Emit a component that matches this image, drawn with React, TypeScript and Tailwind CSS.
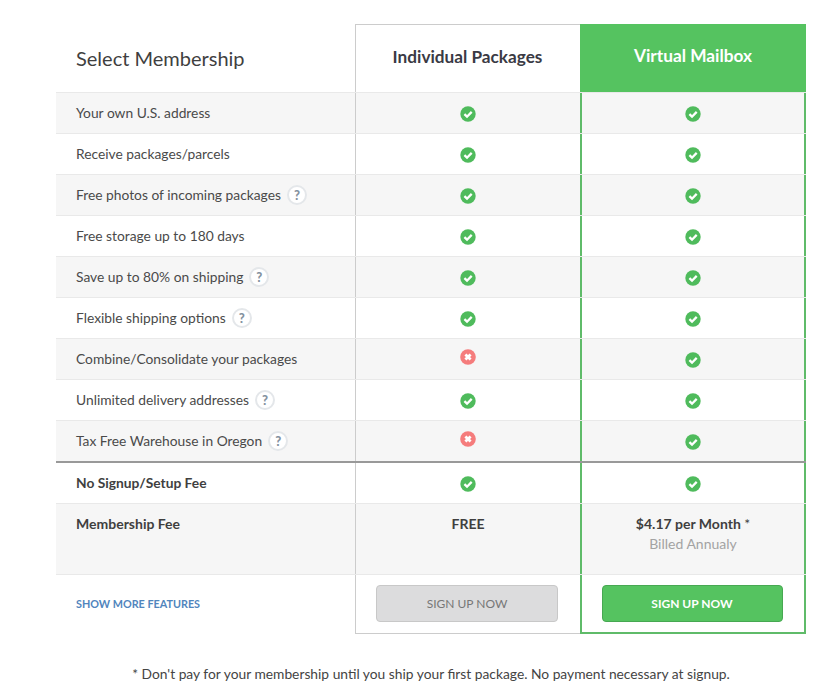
const features = [
  { label: 'Your own U.S. address', basic: true },
  { label: 'Receive packages/parcels', basic: true },
  { label: 'Free photos of incoming packages', basic: true, help: true },
  { label: 'Free storage up to 180 days', basic: true },
  { label: 'Save up to 80% on shipping', basic: true, help: true },
  { label: 'Flexible shipping options', basic: true, help: true },
  { label: 'Combine/Consolidate your packages', basic: false },
  { label: 'Unlimited delivery addresses', basic: true, help: true },
  { label: 'Tax Free Warehouse in Oregon', basic: false, help: true },
];

function Check() {
  return (
    <svg width="16" height="16" viewBox="0 0 16 16" className="block">
      <circle cx="8" cy="8" r="7.7" fill="#4fbb5c" />
      <path d="M4.4 8.2 L7 10.7 L11.7 5.9" fill="none" stroke="#fff" strokeWidth="2.3" />
    </svg>
  );
}

function Cross() {
  return (
    <svg width="16" height="16" viewBox="0 0 16 16" className="block">
      <circle cx="8" cy="8" r="7.8" fill="#f57c7c" />
      <path d="M5.4 5.4 L10.6 10.6 M10.6 5.4 L5.4 10.6" fill="none" stroke="#fff" strokeWidth="2.8" />
    </svg>
  );
}

function Help() {
  return (
    <span className="ml-[6px] flex h-5 w-5 items-center justify-center rounded-full border-2 border-[#e4e7ea] bg-white text-[13px] font-black leading-none text-[#84929f]">
      ?
    </span>
  );
}

export default function App() {
  return (
    <div className="min-h-[696px] bg-white pl-14 pt-6 font-['Lato',sans-serif] text-[#444]">
      <div className="w-[750px]">
        {/* Header */}
        <div className="grid h-[68px] grid-cols-[299px_225px_226px]">
          <div className="flex items-center pb-[1px] pl-5 text-[20px] text-[#3f3f3f]">Select Membership</div>
          <div className="flex items-center justify-center border-l border-t border-[#ccc] pb-[3px] pr-[1px] text-[17.2px] font-bold text-[#3a3a44]">
            Individual Packages
          </div>
          <div className="flex items-center justify-center bg-[#55c360] pb-[5px] text-[17.3px] font-bold text-white">
            Virtual Mailbox
          </div>
        </div>

        {/* Feature rows */}
        {features.map((f, i) => (
          <div
            key={f.label}
            className={`grid h-[41px] grid-cols-[299px_225px_226px] border-t border-[#e9e9e9] ${i % 2 === 0 ? 'bg-[#f6f6f6]' : 'bg-white'}`}
          >
            <div className="flex items-center pl-5 text-[13.8px] leading-5 text-[#4a4a4a]">
              {f.label}
              {f.help && <Help />}
            </div>
            <div className={`flex justify-center border-l border-[#ccc] pr-[1px] ${f.basic ? 'pt-[13px]' : 'pt-[10px]'}`}>
              {f.basic ? <Check /> : <Cross />}
            </div>
            <div className="flex justify-center border-x-2 border-[#5fbb69] pr-[1px] pt-[13px]">
              <Check />
            </div>
          </div>
        ))}

        {/* Summary rows */}
        <div className="grid h-[42px] grid-cols-[299px_225px_226px] border-t-2 border-[#999]">
          <div className="flex items-center pl-5 text-[13.8px] font-bold leading-5 text-[#3f3f3f]">No Signup/Setup Fee</div>
          <div className="flex justify-center border-l border-[#ccc] pr-[1px] pt-[13px]">
            <Check />
          </div>
          <div className="flex justify-center border-x-2 border-[#5fbb69] pr-[1px] pt-[13px]">
            <Check />
          </div>
        </div>
        <div className="grid h-[71px] grid-cols-[299px_225px_226px] border-t border-[#e9e9e9] bg-[#f6f6f6] text-[14px] leading-5">
          <div className="pl-5 pt-[10px] font-bold text-[#3f3f3f]">Membership Fee</div>
          <div className="border-l border-[#ccc] pt-[10px] text-center font-bold text-[#3f3f3f]">FREE</div>
          <div className="border-x-2 border-[#5fbb69] pt-[10px] text-center">
            <div className="font-bold text-[#3f3f3f]">
              $4.17 per Month <span className="font-normal">*</span>
            </div>
            <div className="text-[#a3a3a3]">Billed Annualy</div>
          </div>
        </div>

        {/* Footer */}
        <div className="grid h-[60px] grid-cols-[299px_225px_226px] border-t border-[#e9e9e9]">
          <div className="flex items-center pb-[1px] pl-5 text-[10.8px] font-bold text-[#5185bd]">SHOW MORE FEATURES</div>
          <div className="flex justify-center border-b border-l border-[#ccc] pr-[2px] pt-[10px]">
            <button className="h-[37px] w-[182px] rounded-[4px] border border-[#c8c8c8] bg-[#dcdcdd] text-[12px] text-[#777]">
              SIGN UP NOW
            </button>
          </div>
          <div className="flex justify-center border-x-2 border-b-2 border-[#5fbb69] pr-[2px] pt-[10px]">
            <button className="h-[37px] w-[181px] rounded-[4px] border border-[#47a852] bg-[#55c360] text-[12px] font-bold text-white">
              SIGN UP NOW
            </button>
          </div>
        </div>
      </div>

      <p className="mt-[30px] w-[750px] text-center text-[13.8px] text-[#444]">
        * Don't pay for your membership until you ship your first package. No payment necessary at signup.
      </p>
    </div>
  );
}
